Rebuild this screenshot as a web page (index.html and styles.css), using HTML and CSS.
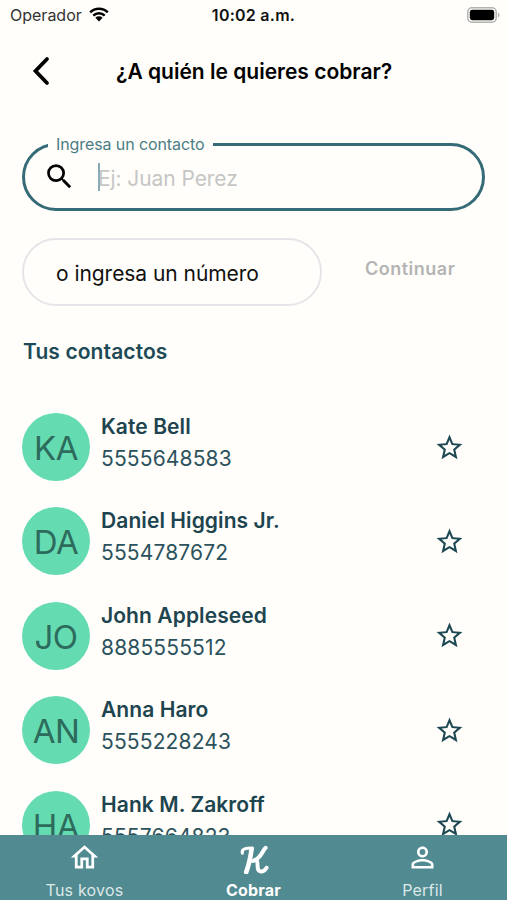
FILE: index.html
```
<!DOCTYPE html>
<html lang="es">
<head>
    <meta charset="utf-8">
    <title>Cobrar</title>
    <link rel="stylesheet" href="styles.css">
</head>
<body>
    <svg class="sprite">
        <symbol id="star" viewBox="0 0 24 24">
            <path d="M22 9.24l-7.19-.62L12 2 9.19 8.63 2 9.24l5.46 4.73L5.82 21 12 17.27 18.18 21l-1.63-7.03L22 9.24zM12 15.4l-3.76 2.27 1-4.28-3.32-2.88 4.38-.38L12 6.1l1.71 4.04 4.38.38-3.32 2.88 1 4.28L12 15.4z"/>
        </symbol>
    </svg>
    <div class="screen">
        <div class="status-bar">
            <div class="carrier">
                <span class="carrier-name">Operador</span>
                <svg class="wifi" viewBox="0 0 20 15">
                    <path d="M1.2 5.3a12.5 12.5 0 0 1 17.6 0M4.3 8.6a8.1 8.1 0 0 1 11.4 0" fill="none" stroke="#000" stroke-width="2.5"/>
                    <path d="M6.4 10.8a5.2 5.2 0 0 1 7.2 0L10 14.6z"/>
                </svg>
            </div>
            <span class="time">10:02 a.m.</span>
            <svg class="battery" viewBox="0 0 33 16">
                <rect x=".8" y=".8" width="28.4" height="14.4" rx="4.2" fill="none" stroke="#b2b2b0" stroke-width="1.5"/>
                <rect x="2.8" y="2.8" width="24.4" height="10.4" rx="2.4"/>
                <path d="M31 5.5c2 .8 2 4.2 0 5z" fill="#b2b2b0"/>
            </svg>
        </div>

        <div class="header">
            <svg class="back" viewBox="0 0 18 30"><path d="M15 3L3.5 15 15 27"/></svg>
            <h1>¿A quién le quieres cobrar?</h1>
        </div>

        <fieldset class="search-field">
            <legend>Ingresa un contacto</legend>
            <div class="search-row">
                <svg class="search-icon" viewBox="0 0 24 24"><path d="M15.5 14h-.79l-.28-.27A6.47 6.47 0 0 0 16 9.5 6.5 6.5 0 1 0 9.5 16c1.61 0 3.09-.59 4.23-1.57l.27.28v.79l5 4.99L20.49 19l-4.99-5zm-6 0C7.01 14 5 11.99 5 9.5S7.01 5 9.5 5 14 7.01 14 9.5 11.99 14 9.5 14z"/></svg>
                <span class="caret"></span>
                <span class="placeholder">Ej: Juan Perez</span>
            </div>
        </fieldset>

        <div class="number-row">
            <div class="number-field"><span>o ingresa un número</span></div>
            <span class="continue">Continuar</span>
        </div>

        <h2>Tus contactos</h2>

        <ul class="contacts">
            <li>
                <div class="avatar"><span>KA</span></div>
                <div class="info"><b>Kate Bell</b><span>5555648583</span></div>
                <svg class="star"><use href="#star"/></svg>
            </li>
            <li>
                <div class="avatar"><span>DA</span></div>
                <div class="info"><b>Daniel Higgins Jr.</b><span>5554787672</span></div>
                <svg class="star"><use href="#star"/></svg>
            </li>
            <li>
                <div class="avatar"><span>JO</span></div>
                <div class="info"><b>John Appleseed</b><span>8885555512</span></div>
                <svg class="star"><use href="#star"/></svg>
            </li>
            <li>
                <div class="avatar"><span>AN</span></div>
                <div class="info"><b>Anna Haro</b><span>5555228243</span></div>
                <svg class="star"><use href="#star"/></svg>
            </li>
            <li>
                <div class="avatar"><span>HA</span></div>
                <div class="info"><b>Hank M. Zakroff</b><span>5557664823</span></div>
                <svg class="star"><use href="#star"/></svg>
            </li>
        </ul>

        <div class="tab-bar">
            <div class="tab">
                <svg viewBox="0 0 24 24"><path d="M12 5.69l5 4.5V18h-2v-6H9v6H7v-7.81l5-4.5M12 3L2 12h3v8h6v-6h2v6h6v-8h3L12 3z"/></svg>
                <span>Tus kovos</span>
            </div>
            <div class="tab active">
                <svg class="logo" viewBox="0 0 34 34">
                    <path d="M5.500 12.500C4.500 8.500 8 7.300 16 7.200" stroke-width="3.200"/>
                    <path d="M15 8.500C14 16 12.500 24 9.500 32" stroke-width="4.800"/>
                    <path d="M29.500 7C26 10 25 18 16.500 20.500" stroke-width="4.200"/>
                    <path d="M18 20C22.500 19.500 20.500 24 21.500 28.500C22.500 33 28 32 30.500 27.500" stroke-width="4"/>
                </svg>
                <span>Cobrar</span>
            </div>
            <div class="tab">
                <svg viewBox="0 0 24 24"><path d="M12 5.9a2.1 2.1 0 1 1 0 4.2 2.1 2.1 0 0 1 0-4.2m0 9c2.97 0 6.1 1.46 6.1 2.1v1.1H5.9V17c0-.64 3.13-2.1 6.1-2.1M12 4C9.79 4 8 5.79 8 8s1.79 4 4 4 4-1.79 4-4-1.79-4-4-4zm0 9c-2.67 0-8 1.34-8 4v3h16v-3c0-2.66-5.33-4-8-4z"/></svg>
                <span>Perfil</span>
            </div>
        </div>
    </div>
</body>
</html>
```
FILE: styles.css
```
* {
    box-sizing: border-box;
}

body {
    margin: 0;
    font-family: Inter, "Liberation Sans", sans-serif;
    background: #fffefa;
    color: #000;
}

.sprite {
    display: none;
}

.screen {
    display: flex;
    flex-direction: column;
    height: 900px;
    overflow: hidden;
    white-space: nowrap;
}

.status-bar {
    display: grid;
    grid-template-columns: 1fr auto 1fr;
    align-items: center;
    height: 29px;
    padding: 0 7px 0 10px;
    font-size: 16px;
}

.carrier {
    display: flex;
    align-items: center;
    gap: 7px;
    color: #333;
}

.wifi {
    width: 20px;
    height: 15px;
}

.time {
    margin-left: -3px;
    font-weight: 600;
    letter-spacing: 0.25px;
    color: #111;
}

.battery {
    width: 33px;
    height: 16px;
    justify-self: end;
}

.header {
    display: flex;
    align-items: center;
    height: 84px;
    padding-left: 32px;
}

.back {
    width: 18px;
    height: 30px;
    margin-right: 66px;
    fill: none;
    stroke: #000;
    stroke-width: 3.8;
    stroke-linecap: round;
}

h1 {
    margin: 0;
    font-size: 21px;
    font-weight: 600;
}

.search-field {
    height: 77px;
    margin: 21px 22px 0;
    padding: 0 22px;
    border: 3px solid #356b77;
    border-radius: 34px;
}

.search-field legend {
    height: 20px;
    margin-left: 1px;
    padding: 0 9px 0 8px;
    line-height: 20px;
    font-size: 16px;
    letter-spacing: -0.1px;
    color: #4b7d86;
}

.search-row {
    display: flex;
    align-items: center;
    height: 46px;
}

.search-icon {
    width: 33px;
    height: 33px;
    margin: -2px 22px 0 -4px;
}

.caret {
    width: 2px;
    height: 28px;
    background: #87aab1;
}

.placeholder {
    margin: 2px 0 0 -2px;
    font-size: 21px;
    letter-spacing: -0.08px;
    color: #c6c6c5;
}

.number-row {
    display: flex;
    align-items: center;
    margin: 27px 22px 0;
}

.number-field {
    display: flex;
    align-items: center;
    width: 300px;
    height: 68px;
    padding: 2px 0 0 32px;
    border: 2px solid #e6e5ea;
    border-radius: 34px;
    font-size: 21px;
    letter-spacing: -0.05px;
    color: #111;
}

.continue {
    margin: -8px 0 0 43px;
    font-size: 18px;
    font-weight: 600;
    letter-spacing: 0.5px;
    color: #b4b4b4;
}

h2 {
    margin: 32px 0 0 23px;
    line-height: 28px;
    font-size: 21px;
    font-weight: 600;
    letter-spacing: 0.1px;
    color: #1d4a56;
}

.contacts {
    display: flex;
    flex: 1;
    flex-direction: column;
    gap: 26.4px;
    min-height: 0;
    margin: 0;
    padding: 47px 42px 0 22px;
    overflow: hidden;
    list-style: none;
}

.contacts li {
    display: flex;
    flex: none;
    align-items: center;
    height: 68px;
}

.avatar {
    display: flex;
    align-items: center;
    justify-content: center;
    width: 68px;
    height: 68px;
    padding-top: 2px;
    border-radius: 50%;
    background: #65dbb2;
    font-size: 33px;
    letter-spacing: -0.5px;
    color: #2d6b5c;
}

.info {
    display: flex;
    flex: 1;
    flex-direction: column;
    align-items: flex-start;
    margin: -8px 0 0 11px;
    line-height: 32px;
    font-size: 21px;
    letter-spacing: 0.15px;
    color: #2c525d;
}

.info b {
    font-weight: 600;
    letter-spacing: 0.08px;
    color: #1d444f;
}

.star {
    width: 31px;
    height: 31px;
    fill: #1d4853;
}

.tab-bar {
    display: grid;
    grid-template-columns: repeat(3, 1fr);
    flex: none;
    height: 65px;
    background: #528a91;
}

.tab {
    display: flex;
    flex-direction: column;
    align-items: center;
    padding-top: 6px;
    font-size: 16px;
    line-height: 20px;
    letter-spacing: 0.2px;
    color: #dce9e9;
}

.tab svg {
    width: 33px;
    height: 33px;
    margin-bottom: 6px;
    fill: #fff;
}

.tab .logo {
    fill: none;
    stroke: #fff;
    stroke-linecap: round;
    stroke-linejoin: round;
}

.active {
    font-weight: 700;
    color: #fff;
}
```
